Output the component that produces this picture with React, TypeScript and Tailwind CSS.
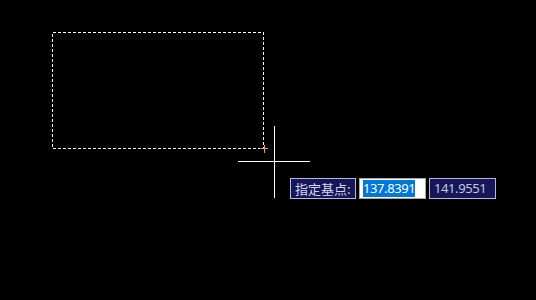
export default function App() {
  return (
    <div className="relative w-[536px] h-[300px] bg-black overflow-hidden">
      {/* drawing canvas */}
      <svg className="absolute inset-0" width="536" height="300" viewBox="0 0 536 300">
        <rect
          x="52.5"
          y="32.5"
          width="211"
          height="116"
          fill="none"
          stroke="#ffffff"
          strokeWidth="1"
          strokeDasharray="3 2"
          shapeRendering="crispEdges"
        />
        {/* grip marker */}
        <line x1="261" y1="148.5" x2="268" y2="148.5" stroke="#f0a050" shapeRendering="crispEdges" />
        <line x1="264.5" y1="145" x2="264.5" y2="153" stroke="#f0a050" shapeRendering="crispEdges" />
        <rect x="260" y="148" width="1" height="1" fill="#3060d0" />
        {/* crosshair */}
        <line x1="274.5" y1="126" x2="274.5" y2="198" stroke="#ffffff" shapeRendering="crispEdges" />
        <line x1="238" y1="161.5" x2="310" y2="161.5" stroke="#ffffff" shapeRendering="crispEdges" />
      </svg>

      {/* dynamic input */}
      <div
        className="absolute left-[290px] top-[178px] flex gap-[3px] text-[13px] tracking-[-0.4px] leading-none"
        style={{ fontFamily: '"Noto Sans", "Noto Sans CJK SC", sans-serif' }}
      >
        <div className="w-[66px] h-[21px] flex items-center pl-[4px] bg-[#16165a] border border-[#b8b8d8] text-[#d8d8e8]">
          <span className="text-[13px] tracking-normal" style={{ fontFamily: '"Noto Sans CJK SC", sans-serif' }}>指定基点:</span>
        </div>
        <div className="w-[67px] h-[21px] flex items-center pl-[3px] bg-white border border-[#a8a8a8]">
          <span className="bg-[#0078d7] text-white h-[17px] flex items-center">137.8391</span>
        </div>
        <div className="w-[67px] h-[21px] flex items-center pl-[4px] bg-[#16165a] border border-[#b8b8d8] text-[#c8c8d8]">
          141.9551
        </div>
      </div>
    </div>
  );
}
